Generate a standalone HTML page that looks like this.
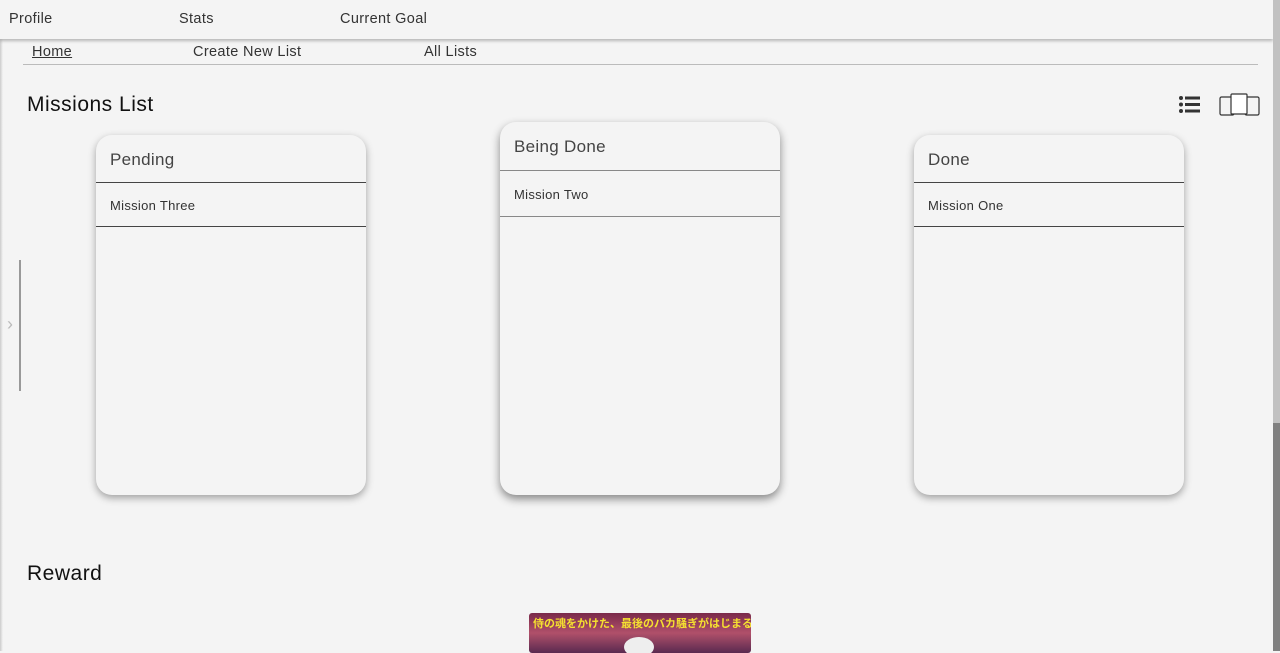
<!DOCTYPE html>
<html><head><style>
body{margin:0;width:1280px;height:651px;overflow:hidden;background:#f4f4f4;font-family:"Liberation Sans",sans-serif;color:#333;position:relative}
.top{position:absolute;left:0;top:0;width:1273px;height:39px;background:#f4f4f4;box-shadow:0 2px 3px rgba(0,0,0,.25)}
.top span{position:absolute;top:11px;font-size:14.5px;letter-spacing:.35px;color:#333}
.sub span{position:absolute;top:44px;font-size:14.5px;letter-spacing:.35px;color:#333}
.hr{position:absolute;left:23px;top:64px;width:1235px;height:1px;background:#bbb}
h2{position:absolute;margin:0;font-weight:normal;font-size:21px;letter-spacing:.5px;color:#111}
.card{position:absolute;background:#f4f4f4;border-radius:16px;box-shadow:0 3px 8px rgba(0,0,0,.35)}
.card .t{position:absolute;left:14px;font-size:17px;letter-spacing:.3px;color:#444}
.card .l{position:absolute;left:0;right:0;height:1px;background:#444}
.card .m{position:absolute;left:14px;font-size:13px;letter-spacing:.3px;color:#333}
.sb1{position:absolute;left:1273px;top:0;width:7px;height:423px;background:#c1c1c1}
.sb2{position:absolute;left:1273px;top:423px;width:7px;height:228px;background:#808080}
</style></head><body>
<div style="position:absolute;left:0;top:0;width:3px;height:651px;background:linear-gradient(90deg,#ccc,#f4f4f4)"></div>
<div class="top"><span style="left:9px">Profile</span><span style="left:179px">Stats</span><span style="left:340px">Current Goal</span></div>
<div class="sub"><span style="left:32px;text-decoration:underline">Home</span><span style="left:193px">Create New List</span><span style="left:424px">All Lists</span></div>
<div class="hr"></div>
<h2 style="left:27px;top:93px">Missions List</h2>
<svg style="position:absolute;left:1178px;top:95px" width="24" height="20"><g fill="#333"><circle cx="3" cy="3" r="2"/><circle cx="3" cy="9.5" r="2"/><circle cx="3" cy="16" r="2"/><rect x="7" y="1.5" width="15" height="3"/><rect x="7" y="8" width="15" height="3"/><rect x="7" y="14.5" width="15" height="3"/></g></svg>
<svg style="position:absolute;left:1218px;top:93px" width="44" height="26"><g fill="#f4f4f4" stroke="#333" stroke-width="1.2"><rect x="2" y="4" width="14" height="18" rx="1.5"/><rect x="27" y="4" width="14" height="18" rx="1.5"/><rect x="13" y="1" width="16" height="20" rx="1" fill="#fff"/></g></svg>
<div style="position:absolute;left:19px;top:260px;width:2px;height:131px;background:#999"></div>
<div style="position:absolute;left:7px;top:314px;color:#bbb;font-size:18px">&#8250;</div>
<div class="card" style="left:96px;top:135px;width:270px;height:360px"><div class="t" style="top:15px">Pending</div><div class="l" style="top:47px"></div><div class="m" style="top:63px">Mission Three</div><div class="l" style="top:91px"></div></div>
<div class="card" style="left:500px;top:122px;width:280px;height:373px;box-shadow:0 4px 9px rgba(0,0,0,.45)"><div class="t" style="top:15px">Being Done</div><div class="l" style="top:48px;background:#888"></div><div class="m" style="top:65px">Mission Two</div><div class="l" style="top:94px;background:#888"></div></div>
<div class="card" style="left:914px;top:135px;width:270px;height:360px"><div class="t" style="top:15px">Done</div><div class="l" style="top:47px"></div><div class="m" style="top:63px">Mission One</div><div class="l" style="top:91px"></div></div>
<h2 style="left:27px;top:562px">Reward</h2>
<div style="position:absolute;left:529px;top:613px;width:222px;height:40px;border-radius:3px;background:linear-gradient(180deg,#7a2a4a,#b0506a 50%,#5a2a50);overflow:hidden">
<div style="position:absolute;left:4px;top:2px;font-size:11px;color:#f5e030;font-family:'Liberation Sans','Noto Sans CJK JP',sans-serif;font-weight:bold;white-space:nowrap">侍の魂をかけた、最後のバカ騒ぎがはじまる!</div>
<div style="position:absolute;left:95px;top:24px;width:30px;height:20px;border-radius:50%;background:#eee"></div></div>
<div class="sb1"></div><div class="sb2"></div>
</body></html>
